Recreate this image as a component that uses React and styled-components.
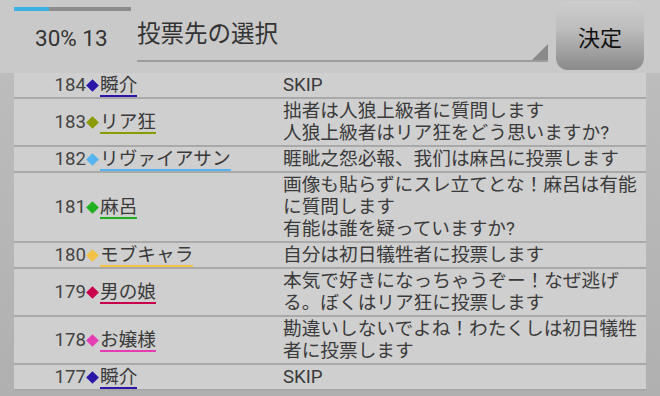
import React from "react";
import styled, { createGlobalStyle } from "styled-components";

const GlobalStyle = createGlobalStyle`
  html, body {
    margin: 0;
    padding: 0;
    background: #b4b4b4;
  }
  #root {
    width: 660px;
    height: 396px;
    overflow: hidden;
  }
`;

const FONT = `Roboto, "Noto Sans CJK JP", sans-serif`;

const logs = [
  { no: 184, name: "瞬介", color: "#2a17a8", text: "SKIP" },
  {
    no: 183,
    name: "リア狂",
    color: "#8a9c00",
    text: "拙者は人狼上級者に質問します\n人狼上級者はリア狂をどう思いますか?",
  },
  {
    no: 182,
    name: "リヴァイアサン",
    color: "#55b4f0",
    text: "睚眦之怨必報、我们は麻呂に投票します",
  },
  {
    no: 181,
    name: "麻呂",
    color: "#1fb01f",
    text: "画像も貼らずにスレ立てとな！麻呂は有能に質問します\n有能は誰を疑っていますか?",
  },
  { no: 180, name: "モブキャラ", color: "#f2c145", text: "自分は初日犠牲者に投票します" },
  {
    no: 179,
    name: "男の娘",
    color: "#c8004c",
    text: "本気で好きになっちゃうぞー！なぜ逃げる。ぼくはリア狂に投票します",
  },
  {
    no: 178,
    name: "お嬢様",
    color: "#e43db4",
    text: "勘違いしないでよね！わたくしは初日犠牲者に投票します",
  },
  { no: 177, name: "瞬介", color: "#2a17a8", text: "SKIP" },
];

const progress = 30;

const App = () => {
  return (
    <Screen>
      <GlobalStyle />
      <Header>
        <Status>
          <ProgressTrack>
            <ProgressFill style={{ width: `${progress}%` }} />
          </ProgressTrack>
          <Counter>{progress}% 13</Counter>
        </Status>
        <TitleField>
          <Title>投票先の選択</Title>
          <Corner />
        </TitleField>
        <DecideButton>決定</DecideButton>
      </Header>
      <LogArea>
        {logs.map((log, i) => (
          <LogRow key={i}>
            <Speaker>
              <LogNo>{log.no}</LogNo>
              <Diamond $color={log.color} />
              <Name $color={log.color}>{log.name}</Name>
            </Speaker>
            <Message>{log.text}</Message>
          </LogRow>
        ))}
      </LogArea>
    </Screen>
  );
};

const Screen = styled.div`
  width: 660px;
  height: 396px;
  display: flex;
  flex-direction: column;
  font-family: ${FONT};
  color: #3a3a3a;
`;

const Header = styled.div`
  height: 73px;
  flex-shrink: 0;
  display: flex;
  align-items: flex-start;
  background: #c9c9c9;
`;

const Status = styled.div`
  width: 137px;
  padding: 7px 0 0 14px;
  box-sizing: border-box;
`;

const ProgressTrack = styled.div`
  width: 117px;
  height: 4px;
  background: #8c8c8c;
`;

const ProgressFill = styled.div`
  height: 100%;
  background: #3db2e2;
`;

const Counter = styled.div`
  margin-top: 14px;
  padding-left: 21px;
  font-size: 22.5px;
  line-height: 26px;
  color: #333;
`;

const TitleField = styled.div`
  position: relative;
  flex: 1;
  height: 60px;
  border-bottom: 2px solid #9c9c9c;
`;

const Title = styled.div`
  padding-top: 17px;
  font-size: 23.5px;
  line-height: 30px;
  color: #333;
  font-family: "Noto Sans CJK JP", sans-serif;
`;

const Corner = styled.div`
  position: absolute;
  right: 0;
  bottom: 0;
  width: 0;
  height: 0;
  border-left: 16px solid transparent;
  border-bottom: 16px solid #8a8a8a;
`;

const DecideButton = styled.div`
  margin: 1px 16px 0 8px;
  width: 88px;
  height: 69px;
  border-radius: 12px;
  background: linear-gradient(180deg, #cdcdcd 0%, #bdbdbd 40%, #8a8a8a 100%);
  display: flex;
  align-items: center;
  justify-content: center;
  font-family: "Noto Sans CJK JP", sans-serif;
  font-size: 22px;
  color: #111;
`;

const LogArea = styled.div`
  flex: 1;
  padding: 0 14px;
  background: linear-gradient(180deg, #bcbcbc 0%, #b0b0b0 100%);
`;

const LogRow = styled.div`
  display: grid;
  grid-template-columns: 269px 1fr;
  background: #cfcfcf;
  border-bottom: 2px solid #a9a9a9;
`;

const Speaker = styled.div`
  display: flex;
  align-items: center;
  padding-left: 32px;
  font-size: 18.67px;
`;

const LogNo = styled.span`
  width: 40px;
  text-align: right;
  color: #444;
  line-height: 22px;
`;

const Diamond = styled.span`
  width: 9px;
  height: 9px;
  margin: 0 2px;
  background: ${(p) => p.$color};
  transform: rotate(45deg);
  flex-shrink: 0;
`;

const Name = styled.span`
  display: inline-block;
  margin-top: 1px;
  margin-left: 1px;
  line-height: 20px;
  border-bottom: 2px solid ${(p) => p.$color};
  color: #3a3a3a;
`;

const Message = styled.div`
  padding: 1px 8px 1px 0;
  font-size: 18.67px;
  line-height: 22px;
  white-space: pre-line;
  color: #3a3a3a;
`;

export default App;
